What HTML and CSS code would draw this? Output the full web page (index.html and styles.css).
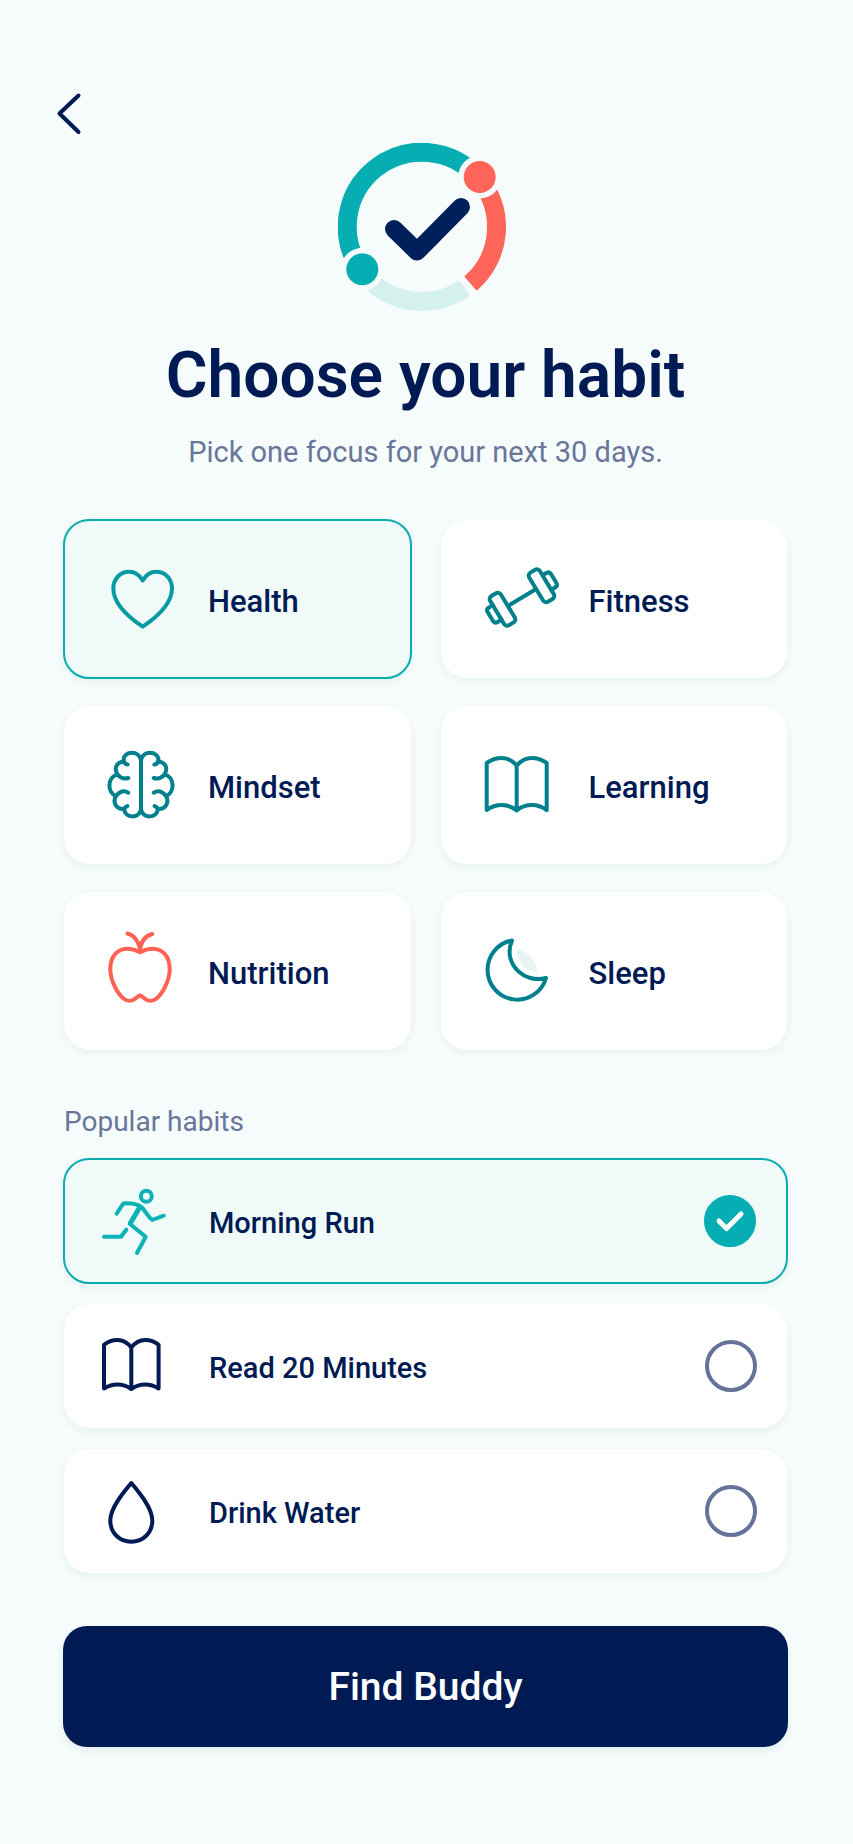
FILE: index.html
```html
<!DOCTYPE html>
<html lang="en">
<head>
  <meta charset="UTF-8">
  <meta name="viewport" content="width=device-width, initial-scale=1.0">
  <title>Choose your habit</title>
  <link rel="stylesheet" href="styles.css">
</head>
<body>

<main class="page">
  <button class="back" type="button" aria-label="Back">
    <svg viewBox="0 0 48 48"><path d="M26.5 5.5L7.5 23.5L26.5 42"/></svg>
  </button>

  <!-- Logo -->
  <svg class="logo" viewBox="0 0 176 168" role="img" aria-label="Logo">
    <path class="arc arc-light" d="M126.6 145.1A74.5 74.5 0 0 1 23.2 127.1"/>
    <path class="arc arc-teal" d="M23.2 127.1A74.5 74.5 0 0 1 140.3 35.2"/>
    <path class="arc arc-coral" d="M140.3 35.2A74.5 74.5 0 0 1 132.5 140.6"/>
    <circle class="halo" cx="141.7" cy="34" r="21.5"/>
    <circle class="dot-coral" cx="141.7" cy="34" r="16"/>
    <circle class="halo" cx="24.3" cy="126.3" r="21.5"/>
    <circle class="dot-teal" cx="24.3" cy="126.3" r="16"/>
    <path class="tick" d="M56 86L79 108.5L123 64"/>
  </svg>

  <h1>Choose your habit</h1>
  <p class="subtitle">Pick one focus for your next 30 days.</p>

  <!-- Categories -->
  <div class="categories">
    <button class="card category selected" type="button" aria-pressed="true">
      <svg class="icon teal-bright" viewBox="0 0 76 76"><path d="M38.7 19.5C35.5 14 30.5 10.7 25.3 10.7C16 10.7 9.3 18 9.3 27.5C9.3 41 22 54.5 38.7 65.7C55.4 54.5 68 41 68 27.5C68 18 61.5 10.7 52 10.7C46.8 10.7 41.9 14 38.7 19.5Z"/></svg>
      <span>Health</span>
    </button>
    <button class="card category" type="button" aria-pressed="false">
      <svg class="icon teal" viewBox="0 0 76 76">
        <g transform="translate(41 36.5) rotate(-31)">
          <path d="M-16 0H16"/>
          <rect x="-29" y="-17" width="12.5" height="34" rx="3.5"/>
          <rect x="16.5" y="-17" width="12.5" height="34" rx="3.5"/>
          <path d="M-29 -8.5H-33.5Q-37 -8.5 -37 -5V5Q-37 8.5 -33.5 8.5H-29"/>
          <path d="M29 -8.5H33.5Q37 -8.5 37 -5V5Q37 8.5 33.5 8.5H29"/>
        </g>
      </svg>
      <span>Fitness</span>
    </button>
    <button class="card category" type="button" aria-pressed="false">
      <svg class="icon teal" viewBox="0 0 76 76">
        <path d="M37 12V63"/>
        <g id="brain-half">
          <path d="M37 13C36 8.5 32 5.7 28 5.7C22.5 5.7 18.5 10 20 14.5C20.7 16.5 22 17.5 23.7 17.5"/>
          <path d="M19.5 14.7C13 15 9.5 21 13.5 27.5C15.5 30 19 32.5 24.3 31"/>
          <path d="M13.5 27.5C3 30 3 45.5 12 49C14.500 46 18.500 42 24.3 45.7"/>
          <path d="M12 49C8.5 55 12 62.5 20 62C20.500 61 21.500 59.500 23.5 59"/>
          <path d="M20 62C21 71.5 35 72 37 62.5"/>
        </g>
        <use href="#brain-half" transform="translate(74 0) scale(-1 1)"/>
      </svg>
      <span>Mindset</span>
    </button>
    <button class="card category" type="button" aria-pressed="false">
      <svg class="icon teal" viewBox="0 0 76 76"><path d="M35.7 18.7C31 13 25.5 11 20.5 11C15 11 10 13 5.7 16V63C10 60 15 58 20.5 58C26 58 31 59.5 35.7 63.5C40.4 59.5 45.4 58 51 58C56.4 58 61.4 60 65.7 63V16C61.4 13 56.4 11 51 11C45.9 11 40.4 13 35.7 18.7ZV63"/></svg>
      <span>Learning</span>
    </button>
    <button class="card category" type="button" aria-pressed="false">
      <svg class="icon coral" viewBox="0 0 76 76">
        <path d="M36 19.3C32 17 28 15.7 23.3 15.7C12.5 15.7 6.3 24.5 6.3 36C6.3 47 13 60 19.5 65.5C23 68.5 28 68.5 31.5 65.500C33 64.2 34.5 62.8 36 62.3C37.5 62.8 39 64.2 40.5 65.5C44 68.5 49 68.5 52.5 65.5C59 60 65.7 47 65.7 36C65.7 24.5 59.5 15.7 48.7 15.7C44 15.7 40 17 36 19.3Z"/>
        <path d="M23.3 .5C30 2 35.5 9 36 18C36.5 9 41 3 48.3 1"/>
      </svg>
      <span>Nutrition</span>
    </button>
    <button class="card category" type="button" aria-pressed="false">
      <svg class="icon teal" viewBox="0 0 76 76">
        <path class="moon-glow" d="M36 16.3C46 18 56 28 56 38.7C44 39 35 28 36 16.3Z"/>
        <path d="M31 7.5A29.8 29.8 0 1 0 65 45C44 51 21 31 31 7.5Z"/>
      </svg>
      <span>Sleep</span>
    </button>
  </div>

  <!-- Popular habits -->
  <h2>Popular habits</h2>
  <div class="habits">
    <label class="card habit selected">
      <svg class="icon runner" viewBox="0 0 76 76">
        <circle cx="50.3" cy="13.3" r="5.5"/>
        <path d="M20.7 30.7L27.3 20.5C33 20 39 20.5 44 23C49 26.5 51 33 56.3 37L67.7 32.7"/>
        <path class="torso" d="M43.3 25L34.5 40"/>
        <path d="M34 41L49.7 53.7L41 70"/>
        <path d="M30.3 46.7L25 53.7H8"/>
      </svg>
      <span>Morning Run</span>
      <span class="radio">
        <input type="radio" name="habit" checked>
        <svg viewBox="0 0 52 52"><path d="M15 26L22.5 33.5L37 19"/></svg>
      </span>
    </label>
    <label class="card habit">
      <svg class="icon navy" viewBox="0 0 76 76"><path d="M35.3 19.5C31 14 26 12 21.5 12C16.5 12 12 13.5 8 16.8V60.5C12 58 16.5 56.5 21.5 56.5C26.5 56.5 31 58 35.3 61C39.6 58 44.1 56.5 49.1 56.5C54.1 56.5 58.6 58 62.6 60.5V16.8C58.6 13.5 54.1 12 49.1 12C44.6 12 39.6 14 35.3 19.5ZV60"/></svg>
      <span>Read 20 Minutes</span>
      <span class="radio"><input type="radio" name="habit"></span>
    </label>
    <label class="card habit">
      <svg class="icon navy" viewBox="0 0 76 76"><path d="M35.3 10C29 17.5 14.3 34 14.3 47.5C14.3 60 23.5 68.7 35.3 68.7C47.1 68.7 56.3 60 56.3 47.5C56.3 34 41.6 17.5 35.3 10Z"/></svg>
      <span>Drink Water</span>
      <span class="radio"><input type="radio" name="habit"></span>
    </label>
  </div>

  <button class="submit" type="button">Find Buddy</button>
</main>

</body>
</html>
```
FILE: styles.css
```css
* {
  box-sizing: border-box;
}

body {
  margin: 0;
  background: #f5fcfb;
  color: #001b54;
  font-family: Roboto, sans-serif;
}

button {
  font-family: inherit;
  color: inherit;
  border: 0;
  cursor: pointer;
}

.page {
  display: flex;
  flex-direction: column;
  padding: 90px 66px 96px 64px;
}

.back {
  width: 48px;
  height: 48px;
  margin-left: -12px;
  padding: 0;
  background: none;
}

.back svg {
  display: block;
  fill: none;
  stroke: #001b54;
  stroke-width: 4;
  stroke-linecap: round;
  stroke-linejoin: round;
}

/* Logo */
.logo {
  width: 176px;
  height: 168px;
  margin-top: 5px;
  align-self: center;
}

.arc {
  fill: none;
  stroke-width: 19;
}

.arc-light { stroke: #d5f1ed; }
.arc-teal { stroke: #06aeb3; }
.arc-coral { stroke: #ff6559; }
.dot-teal { fill: #06aeb3; }
.dot-coral { fill: #ff6559; }
.halo { fill: #f5fcfb; }

.tick {
  fill: none;
  stroke: #001f5b;
  stroke-width: 18;
  stroke-linecap: round;
  stroke-linejoin: round;
}

h1 {
  margin: 25px 0 16px;
  font-size: 64px;
  font-weight: 600;
  line-height: 80px;
  text-align: center;
}

.subtitle {
  margin: 0 0 48px;
  font-size: 29px;
  line-height: 40px;
  text-align: center;
  color: #69769a;
}

/* Cards */
.card {
  display: flex;
  align-items: center;
  background: #fff;
  border-radius: 26px;
  box-shadow: 0 3px 8px rgba(0, 80, 80, 0.06);
  cursor: pointer;
}

.card.selected {
  margin: -1px;
  background: #effaf9;
  border: 2px solid #0aacb0;
}

.categories {
  display: grid;
  grid-template-columns: 1fr 1fr;
  grid-auto-rows: 158px;
  gap: 28px 30px;
}

.category {
  padding: 4px 24px 0 40px;
  gap: 28px;
  font-size: 31px;
  font-weight: 500;
}

.category:nth-child(even) {
  gap: 32px;
}

.category.selected {
  padding-left: 39px;
}

.icon {
  flex: none;
  width: 76px;
  height: 76px;
  margin-top: -4px;
  overflow: visible;
  fill: none;
  stroke-width: 4;
  stroke-linecap: round;
  stroke-linejoin: round;
}

.teal { stroke: #007f8c; }
.teal-bright { stroke: #0799a2; }
.coral { stroke: #ff6253; }
.navy { stroke: #001b54; }
.runner { stroke: #0bb2b6; }
.torso { stroke-width: 5; }

.moon-glow {
  fill: #e6f5f3;
  stroke: none;
}

/* Popular habits */
h2 {
  margin: 56px 0 21px;
  font-size: 28px;
  font-weight: 400;
  line-height: 32px;
  color: #69769a;
}

.habits {
  display: grid;
  grid-auto-rows: 124px;
  gap: 21px;
}

.habit {
  padding: 4px 30px 0 32px;
  gap: 37px;
  font-size: 29px;
  font-weight: 500;
}

.habit.selected {
  padding-left: 31px;
}

.radio {
  display: grid;
  width: 52px;
  height: 52px;
  margin: -4px 0 0 auto;
}

.radio input {
  grid-area: 1 / 1;
  appearance: none;
  width: 52px;
  height: 52px;
  margin: 0;
  border: 4px solid #65739a;
  border-radius: 50%;
}

.radio input:checked {
  background: #06aeb3;
  border-color: #06aeb3;
}

.radio svg {
  grid-area: 1 / 1;
  z-index: 1;
  fill: none;
  stroke: #fff;
  stroke-width: 5;
  stroke-linecap: round;
  stroke-linejoin: round;
  pointer-events: none;
}

.submit {
  height: 121px;
  margin: 53px -1px 0;
  background: #001b54;
  border-radius: 24px;
  box-shadow: 0 3px 8px rgba(0, 80, 80, 0.08);
  color: #fff;
  font-size: 39px;
  font-weight: 500;
}
```
